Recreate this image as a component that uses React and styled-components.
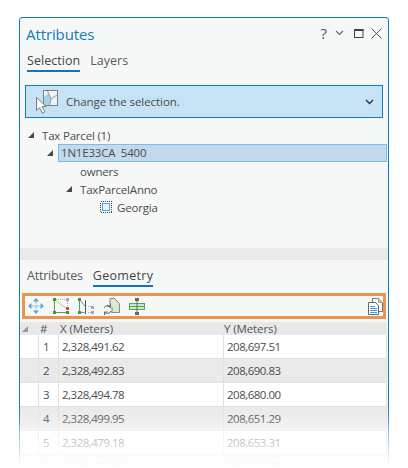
import React from 'react';
import styled, { createGlobalStyle } from 'styled-components';

const GlobalStyle = createGlobalStyle`
    html, body {
        margin: 0;
        padding: 0;
        background: #fff;
    }
    body {
        font-family: "Open Sans", "Noto Sans", sans-serif;
        color: #4c4c4c;
    }
`
const Page = styled.div`
    position: relative;
    width: 408px;
    height: 468px;
    overflow: hidden;
    padding: 17px 19px 0;
    box-sizing: border-box;
`
const Panel = styled.section`
    width: 370px;
    height: 470px;
    box-sizing: border-box;
    border: 1px solid #0a7cc4;
    border-radius: 3px 3px 0 0;
    background: #f6f8f8;
`
const Fade = styled.div`
    position: absolute;
    left: 0;
    right: 0;
    bottom: 0;
    height: 63px;
    background: linear-gradient(to bottom,
        rgba(255,255,255,0) 0%,
        rgba(255,255,255,.14) 21%,
        rgba(255,255,255,.5) 40%,
        rgba(255,255,255,.66) 59%,
        rgba(255,255,255,.85) 78%,
        rgba(255,255,255,.95) 92%,
        #fff 100%);
`
const TitleBar = styled.header`
    display: flex;
    align-items: center;
    justify-content: space-between;
    height: 30px;
    padding: 2px 6px 0 6px;
    box-sizing: border-box;
`
const Title = styled.h1`
    margin: 0;
    font-size: 15px;
    font-weight: 400;
    letter-spacing: -.1px;
    color: #0f7cc4;
`
const WindowButtons = styled.div`
    display: flex;
    align-items: center;
    gap: 7px;
    padding-bottom: 2px;
`
const Help = styled.span`
    font-size: 15px;
    line-height: 15px;
    color: #555;
    margin-right: 1px;
`
const Tabs = styled.nav`
    display: flex;
    gap: ${p => p.$gap}px;
    padding-left: 7px;
    height: ${p => p.$height}px;
    box-sizing: border-box;
`
const Tab = styled.div`
    height: 100%;
    box-sizing: border-box;
    padding-top: ${p => p.$top || 0}px;
    font-size: 12.5px;
    line-height: 18px;
    letter-spacing: ${p => p.$spacing || 0}px;
    color: ${p => p.$active ? '#444' : '#5a5a5a'};
    font-weight: ${p => p.$active ? 500 : 400};
    border-bottom: 2px solid ${p => p.$active ? '#0f74b8' : 'transparent'};
`
const Dropdown = styled.div`
    display: flex;
    align-items: center;
    height: 33px;
    margin: 13px 5px 0 5px;
    padding: 0 8px 0 10px;
    box-sizing: border-box;
    border: 1px solid #0f7cc0;
    background: #c6e2f5;
    font-size: 11.5px;
    letter-spacing: -.05px;
    color: #4a4a4a;
`
const DropdownText = styled.span`
    flex: 1;
    margin-left: 8px;
`
const Tree = styled.div`
    margin-top: 8px;
    height: 122px;
`
const TreeRow = styled.div`
    display: flex;
    align-items: center;
    height: 18px;
    box-sizing: border-box;
    padding-left: ${p => p.$indent}px;
    font-size: 11.5px;
    letter-spacing: -.2px;
    color: #4c4c4c;
    white-space: pre;
`
const Arrow = styled.svg`
    width: 6px;
    height: 6px;
    margin-right: 8px;
    flex: none;
`
const Selected = styled.div`
    flex: 1;
    height: 18px;
    margin-right: 1px;
    margin-left: -3px;
    padding-left: 2px;
    box-sizing: border-box;
    line-height: 16px;
    background: #c3d9ee;
    border: 1px solid #7cbde8;
`
const Band = styled.div`
    height: 12px;
    background: #eaeaea;
`
const GeometryTabs = styled(Tabs)`
    margin-top: 7px;
`
const Toolbar = styled.div`
    display: flex;
    align-items: center;
    justify-content: space-between;
    height: 26px;
    margin: 6px 2px 3px 2px;
    padding: 0 0 0 3px;
    box-sizing: border-box;
    border: 3px solid #e8964f;
`
const ToolGroup = styled.div`
    display: flex;
    align-items: center;
    gap: 9px;
`
const Grid = styled.div`
    display: grid;
    grid-template-columns: 19px 20px 165px 1fr;
    margin-right: 1px;
    font-size: 11.5px;
`
const HeadCell = styled.div`
    height: 13px;
    background: #e8e8e8;
    line-height: 13px;
    letter-spacing: -.1px;
    color: #555;
    padding-left: ${p => p.$pad || 0}px;
    display: flex;
    align-items: center;
`
const Cell = styled.div`
    height: 24px;
    line-height: 23px;
    box-sizing: border-box;
    background: ${p => p.$odd ? '#fff' : '#eaeaea'};
    border-bottom: 1px solid #e0e0e0;
    border-right: 1px solid #e0e0e0;
    padding-left: ${p => p.$pad}px;
    font-size: 11.5px;
    letter-spacing: -.5px;
    color: #4c4c4c;
`

const rows = [
    ['2,328,491.62', '208,697.51'],
    ['2,328,492.83', '208,690.83'],
    ['2,328,494.78', '208,680.00'],
    ['2,328,499.95', '208,651.29'],
    ['2,328,479.18', '208,653.31'],
    ['2,328,479.30', '208,680.76'],
]

const Expanded = () => (
    <Arrow viewBox="0 0 6 6"><polygon points="6,0 6,6 0,6" fill="#4a4a4a" /></Arrow>
)

const CloseIcons = () => (
    <WindowButtons>
        <Help>?</Help>
        <svg width="9" height="6" viewBox="0 0 9 6"><path d="M1 1l3.5 3.5L8 1" fill="none" stroke="#666" strokeWidth="1.1" /></svg>
        <svg width="10" height="9" viewBox="0 0 10 9" style={{ marginLeft: 3 }}><rect x=".5" y=".5" width="8.5" height="8" fill="none" stroke="#444" /><rect x="0" y="0" width="9.5" height="2" fill="#444" /></svg>
        <svg width="11" height="11" viewBox="0 0 11 11"><path d="M.5.5l10 10M10.5.5l-10 10" fill="none" stroke="#555" strokeWidth="1" /></svg>
    </WindowButtons>
)

const SelectionIcon = () => (
    <svg width="22" height="24" viewBox="0 0 22 24">
        <rect x="7.500" y=".5" width="14" height="15" fill="#eef5f8" stroke="#808080" />
        <path d="M8 15V6.500l4-3 3 6-1.500 5.500z" fill="#9fd6ee" />
        <path d="M11.500 1l3.500 8 6-4M15 9l-1.500 6" fill="none" stroke="#9a9a9a" />
        <path d="M.5 7.500v13l3-2.800 3 5.500 2.500-1.400-3-5.200h4.200z" fill="#fff" stroke="#7a7a7a" />
    </svg>
)

const PanIcon = () => (
    <svg width="16" height="16" viewBox="0 0 16 16">
        <path d="M8 0l3 3.500H5zM8 16l-3-3.500h6zM0 8l3.500-3v6zM16 8l-3.500 3V5z" fill="#4ea3e0" />
        <path d="M8 4v8M4 8h8" stroke="#8cc4ec" strokeWidth="1.5" strokeDasharray="1.5 1" />
    </svg>
)

const Square = ({ x, y, c }) => <rect x={x} y={y} width="3" height="3" fill={c} />

const VertexIcon = () => (
    <svg width="16" height="16" viewBox="0 0 16 16">
        <path d="M1.500 2v12.500h13" fill="none" stroke="#55a84f" strokeWidth="1" />
        <path d="M2 2l12 9" stroke="#a6cfa0" strokeWidth="1" />
        <path d="M3 1.500h10M14.500 3v6" stroke="#aaa" strokeDasharray="1 1" />
        <Square x={0} y={0} c="#4c8a4a" />
        <Square x={13} y={0} c="#aaa" />
        <Square x={13} y={9} c="#e2472a" />
        <Square x={0} y={13} c="#4c8a4a" />
        <Square x={13} y={13} c="#4c8a4a" />
    </svg>
)

const MirrorIcon = () => (
    <svg width="16" height="16" viewBox="0 0 16 16">
        <path d="M1.500 2v12.500h5M2 2l5 6" fill="none" stroke="#55a84f" />
        <path d="M7.500 2v14" stroke="#555" />
        <path d="M10 8.500h3M10 14.500h3" fill="none" stroke="#aaa" strokeDasharray="1 1" />
        <Square x={0} y={0} c="#4c8a4a" />
        <Square x={0} y={13} c="#4c8a4a" />
        <Square x={13} y={8} c="#aaa" />
        <Square x={13} y={13} c="#aaa" />
    </svg>
)

const RotateIcon = () => (
    <svg width="17" height="17" viewBox="0 0 17 17">
        <path d="M7 .5h4.500l5 5v9H8.500l1-4.500H7z" fill="#d6ead2" stroke="#8a8a8a" />
        <path d="M1 10a4 3.500 0 0 1 6.500-1.500M7.500 5.500v3h-3M8 13a4 3.500 0 0 1-6.500 1.500M1.500 17v-3h3" fill="none" stroke="#666" strokeWidth="1" />
    </svg>
)

const SplitIcon = () => (
    <svg width="16" height="17" viewBox="0 0 16 17">
        <rect x=".5" y="5.500" width="15" height="6" fill="#cfe7c9" stroke="#55a84f" />
        <path d="M0 8.500h16" stroke="#55a84f" />
        <path d="M8 1v15" stroke="#666" />
        <rect x="6" y="0" width="4" height="3" fill="#666" />
        <rect x="6" y="14" width="4" height="3" fill="#666" />
    </svg>
)

const CopyIcon = () => (
    <svg width="15" height="17" viewBox="0 0 15 17">
        <path d="M4.500.5h6l4 4v9h-4V7.500l-3-3H4.500z" fill="#fff" stroke="#777" />
        <path d="M10.500.5v4h4" fill="#ccc" stroke="#999" />
        <path d="M.5 4.500h7l3 3v9h-10z" fill="#fff" stroke="#666" />
        <path d="M2 8.500h5M2 10.500h7M2 12.500h7M2 14.500h7" stroke="#3f9be0" />
    </svg>
)

const App = () => {
    return (
        <Page>
            <GlobalStyle />
            <Panel>
                <TitleBar>
                    <Title>Attributes</Title>
                    <CloseIcons />
                </TitleBar>
                <Tabs $height={24} $gap={10}>
                    <Tab $active $top={4} $spacing={.05}>Selection</Tab>
                    <Tab $top={4}>Layers</Tab>
                </Tabs>
                <Dropdown>
                    <SelectionIcon />
                    <DropdownText>Change the selection.</DropdownText>
                    <svg width="9" height="6" viewBox="0 0 9 6"><path d="M1 1l3.500 3.500L8 1" fill="none" stroke="#333" strokeWidth="1.4" /></svg>
                </Dropdown>
                <Tree>
                    <TreeRow $indent={8}><Expanded />Tax Parcel (1)</TreeRow>
                    <TreeRow $indent={27}><Expanded /><Selected>1N1E33CA  5400</Selected></TreeRow>
                    <TreeRow $indent={60}>owners</TreeRow>
                    <TreeRow $indent={46}><Expanded />TaxParcelAnno</TreeRow>
                    <TreeRow $indent={80}>
                        <svg width="12" height="12" viewBox="0 0 12 12" shapeRendering="crispEdges" style={{ marginRight: 5 }}>
                            <rect x=".5" y=".5" width="11" height="11" fill="none" stroke="#444" strokeDasharray="1 1" />
                            <rect x="2.500" y="2.500" width="7" height="7" fill="#eaf4fb" stroke="#4ea3e0" />
                        </svg>
                        Georgia
                    </TreeRow>
                </Tree>
                <Band />
                <GeometryTabs $height={20} $gap={10}>
                    <Tab $spacing={-.2}>Attributes</Tab>
                    <Tab $active $spacing={.3}>Geometry</Tab>
                </GeometryTabs>
                <Toolbar>
                    <ToolGroup>
                        <PanIcon />
                        <VertexIcon />
                        <MirrorIcon />
                        <RotateIcon />
                        <SplitIcon />
                    </ToolGroup>
                    <CopyIcon />
                </Toolbar>
                <Grid>
                    <HeadCell $pad={2}><svg width="6" height="6" viewBox="0 0 6 6"><polygon points="6,0 6,6 0,6" fill="#999" /></svg></HeadCell>
                    <HeadCell $pad={1}>#</HeadCell>
                    <HeadCell $pad={1}>X (Meters)</HeadCell>
                    <HeadCell>Y (Meters)</HeadCell>
                    {rows.map((row, i) => (
                        <React.Fragment key={i}>
                            <Cell $odd={i % 2 === 0} $pad={0} />
                            <Cell $odd={i % 2 === 0} $pad={4}>{i + 1}</Cell>
                            <Cell $odd={i % 2 === 0} $pad={3}>{row[0]}</Cell>
                            <Cell $odd={i % 2 === 0} $pad={3}>{row[1]}</Cell>
                        </React.Fragment>
                    ))}
                </Grid>
            </Panel>
            <Fade />
        </Page>
    )
}

export default App
